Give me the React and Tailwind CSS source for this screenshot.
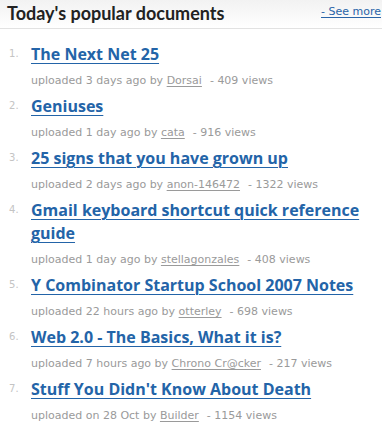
const docs = [
  { title: 'The Next Net 25', when: '3 days ago', user: 'Dorsai', views: 409 },
  { title: 'Geniuses', when: '1 day ago', user: 'cata', views: 916 },
  { title: '25 signs that you have grown up', when: '2 days ago', user: 'anon-146472', views: 1322 },
  { title: 'Gmail keyboard shortcut quick reference guide', when: '1 day ago', user: 'stellagonzales', views: 408 },
  { title: 'Y Combinator Startup School 2007 Notes', when: '22 hours ago', user: 'otterley', views: 698 },
  { title: 'Web 2.0 - The Basics, What it is?', when: '7 hours ago', user: 'Chrono Cr@cker', views: 217 },
  { title: "Stuff You Didn't Know About Death", when: 'on 28 Oct', user: 'Builder', views: 1154 },
]

const small = { fontFamily: '"DejaVu Sans", Verdana, sans-serif' }

export default function App() {
  return (
    <div className="w-[382px] h-[424px] bg-white overflow-hidden" style={{ fontFamily: '"Open Sans", "DejaVu Sans", sans-serif' }}>
      {/* header */}
      <div className="h-[29px] flex items-start justify-between pl-[7px] pr-[1px] bg-gradient-to-b from-[#f2f2f2] to-white border-b border-[#e2e2e2]">
        <h2 className="text-[18px] leading-[26px] font-bold text-[#222]" style={{ fontFamily: 'Lato, "Open Sans", sans-serif' }}>Today&apos;s popular documents</h2>
        <a href="#" className="text-[11px] leading-[14px] mt-[5px] text-[#2a64a8] underline underline-offset-2" style={small}>- See more</a>
      </div>

      <ol className="pt-[14px]">
        {docs.map((d, i) => (
          <li key={i} className="flex mb-[3px]">
            <span className="w-[31px] pl-[9px] pt-[5px] text-[10px] leading-[12px] text-[#c4c4c4] shrink-0" style={small}>{i + 1}.</span>
            <div className="min-w-0 pr-[8px]">
              <a href="#" className="block text-[16px] leading-[23px] font-bold text-[#2364a8] underline decoration-1 underline-offset-[3px]">{d.title}</a>
              <div className="text-[11px] leading-[22px] text-[#9a9a9a] mt-[4px]" style={small}>
                uploaded {d.when} by <a href="#" className="underline text-[#9a9a9a] underline-offset-2">{d.user}</a>
                <span className="ml-[8px]">- {d.views} views</span>
              </div>
            </div>
          </li>
        ))}
      </ol>
    </div>
  )
}
